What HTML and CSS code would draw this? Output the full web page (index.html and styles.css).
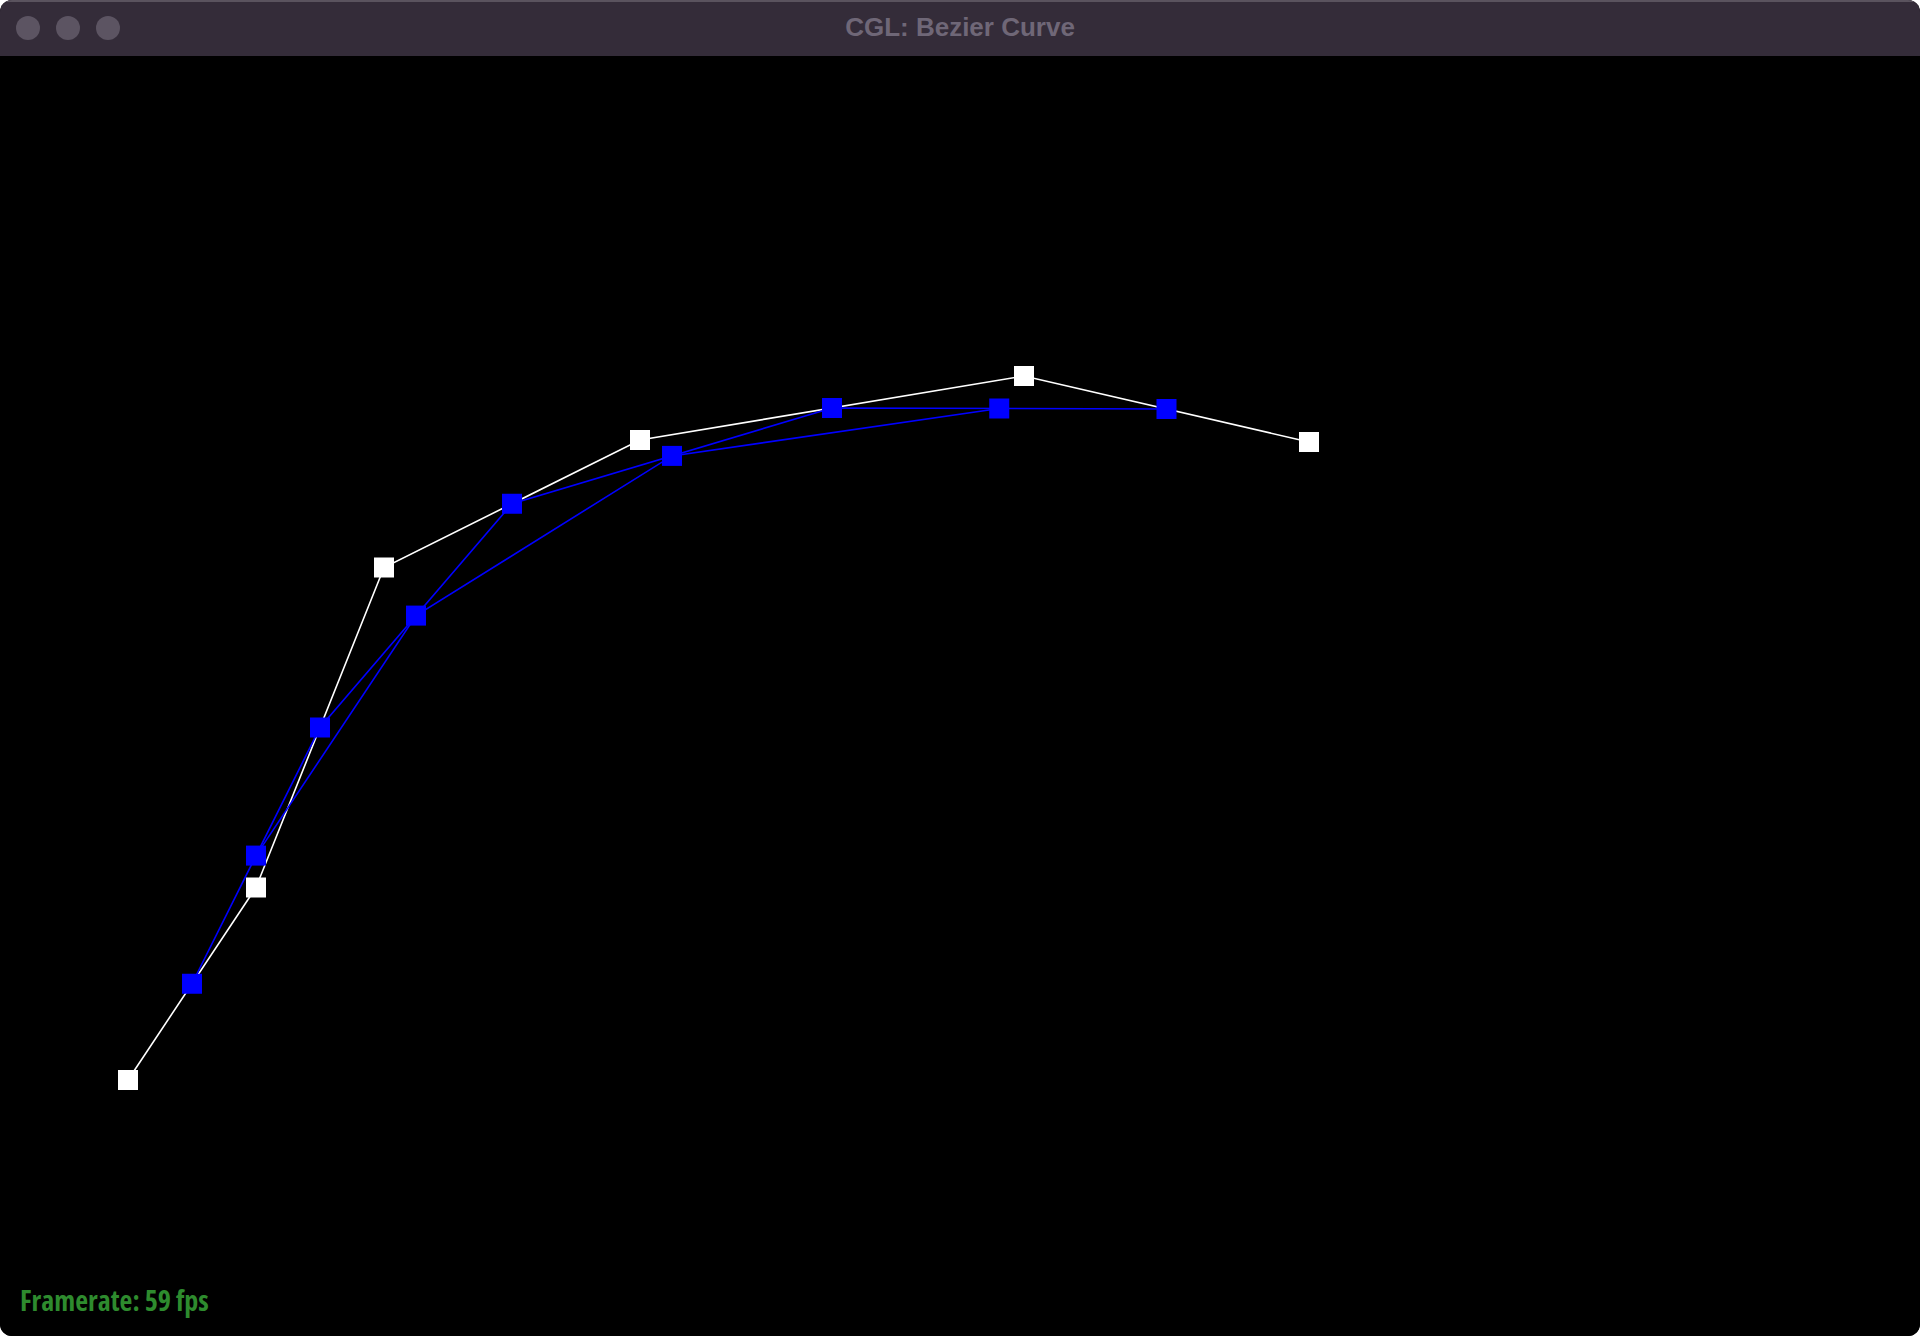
FILE: index.html
```html
<!DOCTYPE html>
<html>
<head>
<meta charset="utf-8">
<link rel="stylesheet" href="styles.css">
</head>
<body>
<div class="window">
  <div class="titlebar">
    <div class="lights">
      <span class="light"></span>
      <span class="light"></span>
      <span class="light"></span>
    </div>
    <div class="title">CGL: Bezier Curve</div>
  </div>
  <div class="canvas">
    <svg class="plot" viewBox="0 56 1920 1280" width="1920" height="1280">
      <g class="white-lines" fill="none" stroke="#ffffff" stroke-width="1.6">
        <polyline points="128,1080 256,887.5 384,567.5 640,440 1024,376 1309,442"/>
      </g>
      <g class="blue-lines" fill="none" stroke="#0000ff" stroke-width="1.6">
        <polyline points="192,983.75 320,727.5 512,503.75 832,408 1166.5,409"/>
        <polyline points="256,855.6 416,615.6 672,455.9 999.25,408.5"/>
      </g>
      <g fill="#ffffff">
        <rect x="118" y="1070" width="20" height="20"/>
        <rect x="246" y="877.5" width="20" height="20"/>
        <rect x="374" y="557.5" width="20" height="20"/>
        <rect x="630" y="430" width="20" height="20"/>
        <rect x="1014" y="366" width="20" height="20"/>
        <rect x="1299" y="432" width="20" height="20"/>
      </g>
      <g fill="#0000ff">
        <rect x="182" y="973.75" width="20" height="20"/>
        <rect x="310" y="717.5" width="20" height="20"/>
        <rect x="502" y="493.75" width="20" height="20"/>
        <rect x="822" y="398" width="20" height="20"/>
        <rect x="1156.5" y="399" width="20" height="20"/>
        <rect x="246" y="845.6" width="20" height="20"/>
        <rect x="406" y="605.6" width="20" height="20"/>
        <rect x="662" y="445.9" width="20" height="20"/>
        <rect x="989.25" y="398.5" width="20" height="20"/>
      </g>
    </svg>
    <div class="framerate">Framerate: 59 fps</div>
  </div>
</div>
</body>
</html>
```
FILE: styles.css
```css
html, body {
  margin: 0;
  padding: 0;
  background: #ffffff;
}
.window {
  width: 1920px;
  height: 1336px;
  border-radius: 12px;
  overflow: hidden;
  display: flex;
  flex-direction: column;
  background: #000;
}
.titlebar {
  height: 56px;
  flex: 0 0 56px;
  box-sizing: border-box;
  background: #342c39;
  border-top: 2px solid #5a535e;
  position: relative;
  display: flex;
  align-items: center;
  justify-content: center;
}
.lights {
  position: absolute;
  left: 16px;
  top: 14px;
  display: flex;
  gap: 16px;
}
.light {
  width: 24px;
  height: 24px;
  border-radius: 50%;
  background: #5c5462;
}
.title {
  font-family: "Liberation Sans", Arial, sans-serif;
  font-weight: bold;
  font-size: 26px;
  color: #6f6777;
  margin-top: -3px;
}
.canvas {
  flex: 1;
  position: relative;
  background: #000;
}
.plot {
  display: block;
}
.framerate {
  position: absolute;
  left: 20px;
  top: 1230px;
  font-family: "Open Sans", "DejaVu Sans", sans-serif;
  font-stretch: 75%;
  font-weight: 700;
  font-size: 28px;
  line-height: 1;
  color: #2e8b2e;
}
```
